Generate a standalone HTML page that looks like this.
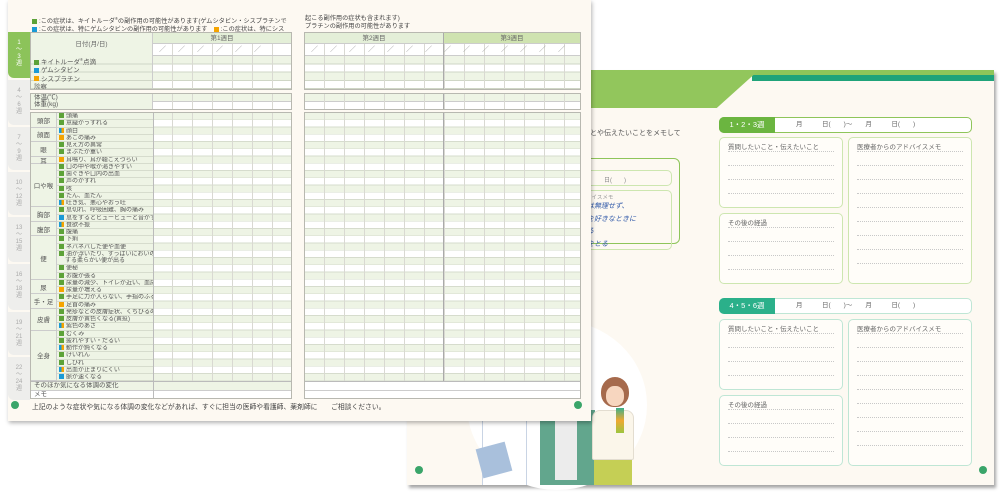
<!DOCTYPE html>
<html><head><meta charset="utf-8"><style>
*{box-sizing:border-box;margin:0;padding:0}
body{width:1000px;height:500px;background:#fff;position:relative;overflow:hidden;font-family:"Liberation Sans","Noto Sans CJK JP",sans-serif;color:#555}
.a{position:absolute}
.back{left:407px;top:70px;width:587px;height:415px;background:#fdf9f2;box-shadow:2px 3px 3px rgba(0,0,0,.35)}
.front{left:8px;top:0;width:583px;height:421px;background:#fdf9f2;box-shadow:1px 2px 4px rgba(0,0,0,.3);z-index:5}
.f{z-index:6}
.grid{background:repeating-linear-gradient(to right,transparent 0 19px,#d9d9d2 19px 20px),repeating-linear-gradient(to bottom,#eef4e5 0 6.3px,#d6dccd 6.3px 7.25px,#fff 7.25px 13.55px,#d6dccd 13.55px 14.5px);}
.box{border:1px solid #b8b8b0}
.tab{left:8px;width:22px;background:#eeeeec;border-radius:0 0 0 6px;font-size:6px;color:#aaa;text-align:center;line-height:7px;padding-top:8px;z-index:6}
.sq{display:inline-block;width:5px;height:5px;margin-right:2px;vertical-align:-0.5px}
.g{background:#5da238}.b{background:#1a9ad6}.o{background:#f5a400}.bo{background:linear-gradient(to right,#1a9ad6 50%,#f5a400 50%)}
.lab{font-size:6px;line-height:7.25px;white-space:nowrap;overflow:hidden}
.cat{font-size:6.5px;display:flex;align-items:center;justify-content:center;background:#eef4e5;border-bottom:1px solid #ccc;border-right:1px solid #ccc}
.it{background:#eef4e5;border-bottom:1px solid #d6dccd;padding-left:2px}
.num{width:8px;height:8px;border-radius:50%;background:#3aa56a}
.hd{font-size:6.5px;text-align:center;line-height:12px;color:#666}
.rbox{border:1.5px solid #cde6b0;border-radius:5px;background:#fffdf9}
.rbox2{border:1.5px solid #bfe6d5;border-radius:5px;background:#fffdf9}
.rl{font-size:6.5px;color:#666;position:absolute;left:8px;top:3px}
.dots{position:absolute;left:8px;right:8px;border-top:1px dotted #c8c8c8}
</style></head><body>

<div class="a back">
  <div class="a" style="left:0;top:0;width:587px;height:5px;background:#8ec55a"></div>
  <div class="a" style="left:345px;top:5px;width:242px;height:6px;background:#1fa37a"></div>
  <div class="a" style="left:0;top:0;width:352px;height:38px;background:#92c65c;clip-path:polygon(0 0,100% 0,88% 100%,0 100%)"></div>
  <div class="a" style="left:183px;top:58px;font-size:7px;color:#555">とや伝えたいことをメモして</div>
  <div class="a" style="left:100px;top:88px;width:173px;height:86px;border:1.5px solid #8ec55a;border-radius:6px"></div>
  <div class="a" style="left:150px;top:100px;width:115px;height:16px;border:1px solid #cde6b0;border-radius:5px;font-size:6px;color:#888;padding:4px 0 0 46px">日(　　)</div>
  <div class="a" style="left:150px;top:120px;width:115px;height:60px;border:1px solid #cde6b0;border-radius:5px;font-size:5.5px;color:#999;padding:2px 0 0 6px">らのアドバイスメモ
    <div style="color:#2f58a8;font-size:7px;line-height:12.5px;margin-left:2px;font-style:italic">いときは無理せず、<br>なものを好きなときに<br>つ食べる<br>に水分をとる</div>
  </div>
  <div class="a" style="left:60px;top:250px;width:180px;height:170px;border-radius:50%;background:#fff"></div>
  <div class="a" style="left:75px;top:335px;width:45px;height:80px;background:#fff;border:1px solid #c9d4e4;border-bottom:none"></div>
  <div class="a" style="left:72px;top:375px;width:30px;height:30px;background:#a9c0dc;transform:rotate(-15deg)"></div>
  <div class="a" style="left:133px;top:340px;width:55px;height:75px;background:#62a68d"></div>
  <div class="a" style="left:148px;top:340px;width:22px;height:70px;background:#ececec"></div>
  <div class="a" style="left:185px;top:340px;width:42px;height:50px;background:#fbf6ea;border:1px solid #e3ddd0;border-radius:8px 8px 2px 2px"></div>
  <div class="a" style="left:187px;top:390px;width:38px;height:25px;background:#c5cf55"></div>
  <div class="a" style="left:194px;top:307px;width:28px;height:30px;border-radius:50% 50% 45% 45%;background:#a66a4c"></div>
  <div class="a" style="left:199px;top:316px;width:18px;height:20px;border-radius:45%;background:#f7d6bf"></div>
  <div class="a" style="left:209px;top:338px;width:8px;height:25px;background:linear-gradient(#3bb08a,#f0a830,#9cc540)"></div>
  <div class="a num" style="left:8px;top:396px"></div>
  <div class="a num" style="left:572px;top:396px"></div>

  <div class="a" style="left:312px;top:47px;width:253px;height:16px;border:1.5px solid #8ec55a;border-radius:5px;background:#fff;font-size:6.5px;color:#666;line-height:13px;padding-left:76px">月　　　日(　　)～　　月　　　日(　　)</div>
  <div class="a" style="left:312px;top:47px;width:56px;height:16px;background:#6bb540;border-radius:5px 0 0 5px;color:#fff;font-size:7.5px;text-align:center;line-height:16px">1・2・3週</div>
  <div class="a rbox" style="left:312px;top:67px;width:124px;height:71px"><span class="rl">質問したいこと・伝えたいこと</span><div class="dots" style="top:13px"></div><div class="dots" style="top:27px"></div><div class="dots" style="top:41px"></div><div class="dots" style="top:55px"></div></div>
  <div class="a rbox" style="left:312px;top:143px;width:124px;height:71px"><span class="rl">その後の経過</span><div class="dots" style="top:13px"></div><div class="dots" style="top:27px"></div><div class="dots" style="top:41px"></div><div class="dots" style="top:55px"></div></div>
  <div class="a rbox" style="left:441px;top:67px;width:124px;height:147px"><span class="rl">医療者からのアドバイスメモ</span><div class="dots" style="top:13px"></div><div class="dots" style="top:27px"></div><div class="dots" style="top:41px"></div><div class="dots" style="top:55px"></div><div class="dots" style="top:69px"></div><div class="dots" style="top:83px"></div><div class="dots" style="top:97px"></div><div class="dots" style="top:111px"></div><div class="dots" style="top:125px"></div></div>

  <div class="a" style="left:312px;top:228px;width:253px;height:16px;border:1.5px solid #bfe6d5;border-radius:5px;background:#fff;font-size:6.5px;color:#666;line-height:13px;padding-left:76px">月　　　日(　　)～　　月　　　日(　　)</div>
  <div class="a" style="left:312px;top:228px;width:56px;height:16px;background:#2bb08a;border-radius:5px 0 0 5px;color:#fff;font-size:7.5px;text-align:center;line-height:16px">4・5・6週</div>
  <div class="a rbox2" style="left:312px;top:249px;width:124px;height:71px"><span class="rl">質問したいこと・伝えたいこと</span><div class="dots" style="top:13px"></div><div class="dots" style="top:27px"></div><div class="dots" style="top:41px"></div><div class="dots" style="top:55px"></div></div>
  <div class="a rbox2" style="left:312px;top:325px;width:124px;height:71px"><span class="rl">その後の経過</span><div class="dots" style="top:13px"></div><div class="dots" style="top:27px"></div><div class="dots" style="top:41px"></div><div class="dots" style="top:55px"></div></div>
  <div class="a rbox2" style="left:441px;top:249px;width:124px;height:147px"><span class="rl">医療者からのアドバイスメモ</span><div class="dots" style="top:13px"></div><div class="dots" style="top:27px"></div><div class="dots" style="top:41px"></div><div class="dots" style="top:55px"></div><div class="dots" style="top:69px"></div><div class="dots" style="top:83px"></div><div class="dots" style="top:97px"></div><div class="dots" style="top:111px"></div><div class="dots" style="top:125px"></div></div>
</div>

<div class="a front"></div>
<div class="a f" style="left:32px;top:15px;font-size:6.2px;line-height:8px;color:#444;white-space:nowrap"><span class="sq g"></span>:この症状は、キイトルーダ<sup style="font-size:4px">®</sup>の副作用の可能性があります(ゲムシタビン・シスプラチンで<br><span class="sq b"></span>:この症状は、特にゲムシタビンの副作用の可能性があります　<span class="sq o"></span>:この症状は、特にシス</div>
<div class="a f" style="left:305px;top:15px;font-size:6.2px;line-height:8px;color:#444;white-space:nowrap">起こる副作用の症状も含まれます)<br>プラチンの副作用の可能性があります</div>

<div class="a tab" style="top:32px;height:46px;background:#8cc35a;color:#fff">1<br>〜<br>3<br>週</div>
<div class="a tab" style="top:80px;height:45px">4<br>〜<br>6<br>週</div>
<div class="a tab" style="top:127px;height:43px">7<br>〜<br>9<br>週</div>
<div class="a tab" style="top:172px;height:43px">10<br>〜<br>12<br>週</div>
<div class="a tab" style="top:217px;height:45px">13<br>〜<br>15<br>週</div>
<div class="a tab" style="top:264px;height:46px">16<br>〜<br>18<br>週</div>
<div class="a tab" style="top:312px;height:43px">19<br>〜<br>21<br>週</div>
<div class="a tab" style="top:357px;height:43px">22<br>〜<br>24<br>週</div>

<div class="a f box" style="left:30px;top:32px;width:262px;height:58px;background:#fff"></div>
<div class="a f hd" style="left:31px;top:33px;width:122px;height:23px;line-height:23px;background:#eef4e5;border-right:1px solid #ccc">日付(月/日)</div>
<div class="a f hd" style="left:153px;top:33px;width:138px;height:11px;line-height:11px;background:#e4efd8;border-bottom:1px solid #ccc">第1週目</div>
<div class="a f" style="left:153px;top:44px;width:138px;height:12px;background:repeating-linear-gradient(to right,transparent 0 19px,#d9d9d2 19px 20px);font-size:7px;color:#999;letter-spacing:12px;padding-left:6px;line-height:12px;border-bottom:1px solid #ccc">／／／／／／／</div>
<div class="a f lab" style="left:31px;top:56px;width:122px;height:33px;font-size:6.5px;line-height:8.3px;padding-left:3px;border-right:1px solid #ccc;background:repeating-linear-gradient(to bottom,#eef4e5 0 7.3px,#cfd6c6 7.3px 8.3px)"><span class="sq g"></span>キイトルーダ<sup style="font-size:4px">®</sup>点滴<br><span class="sq b"></span>ゲムシタビン<br><span class="sq o"></span>シスプラチン<br>診察</div>
<div class="a f" style="left:153px;top:56px;width:138px;height:33px;background:repeating-linear-gradient(to right,transparent 0 19px,#d9d9d2 19px 20px),repeating-linear-gradient(to bottom,#eef4e5 0 7.3px,#cfd6c6 7.3px 8.3px,#fff 8.3px 15.6px,#cfd6c6 15.6px 16.6px)"></div>

<div class="a f box" style="left:30px;top:93px;width:262px;height:17px;background:#fff"></div>
<div class="a f lab" style="left:31px;top:94px;width:122px;height:15px;font-size:6.5px;padding-left:3px;border-right:1px solid #ccc;background:#eef4e5">体温(℃)<br>体重(kg)</div>
<div class="a f" style="left:153px;top:94px;width:138px;height:15px;background:repeating-linear-gradient(to right,transparent 0 19px,#d9d9d2 19px 20px),linear-gradient(#eef4e5 0 7px,#ccc 7px 8px,#fff 8px)"></div>

<div class="a f box" style="left:30px;top:112px;width:262px;height:287px;background:#fff"></div>
<div class="a f" style="left:31px;top:113px;width:122px;display:grid;grid-template-columns:26px 96px;grid-template-rows:repeat(37,7.25px)">
<div class="cat" style="grid-row:span 2">頭部</div><div class="lab it"><span class="sq g"></span>頭痛</div><div class="lab it"><span class="sq g"></span>意識がうすれる</div>
<div class="cat" style="grid-row:span 2">顔面</div><div class="lab it"><span class="sq bo"></span>顔白</div><div class="lab it"><span class="sq o"></span>あごの痛み</div>
<div class="cat" style="grid-row:span 2">眼</div><div class="lab it"><span class="sq g"></span>見え方の異常</div><div class="lab it"><span class="sq g"></span>まぶたが重い</div>
<div class="cat">耳</div><div class="lab it"><span class="sq o"></span>耳鳴り、耳が聴こえづらい</div>
<div class="cat" style="grid-row:span 6">口や喉</div><div class="lab it"><span class="sq g"></span>口の中や喉が渇きやすい</div><div class="lab it"><span class="sq g"></span>歯ぐきや口内の出血</div><div class="lab it"><span class="sq g"></span>声のかすれ</div><div class="lab it"><span class="sq g"></span>咳</div><div class="lab it"><span class="sq g"></span>たん、血たん</div><div class="lab it"><span class="sq bo"></span>吐き気、悪心やおう吐</div>
<div class="cat" style="grid-row:span 2">胸部</div><div class="lab it"><span class="sq g"></span>息切れ、呼吸困難、胸の痛み</div><div class="lab it"><span class="sq b"></span>息をするとヒューヒューと音がする</div>
<div class="cat" style="grid-row:span 2">腹部</div><div class="lab it"><span class="sq bo"></span>食欲不振</div><div class="lab it"><span class="sq g"></span>腹痛</div>
<div class="cat" style="grid-row:span 6">便</div><div class="lab it"><span class="sq g"></span>下痢</div><div class="lab it"><span class="sq g"></span>ネバネバした便や血便</div><div class="lab it" style="grid-row:span 2;line-height:7px"><span class="sq g"></span>油が浮いたり、すっぱいにおいの<br>　する柔らかい便が出る</div><div class="lab it"><span class="sq g"></span>便秘</div><div class="lab it"><span class="sq g"></span>お腹が張る</div>
<div class="cat" style="grid-row:span 2">尿</div><div class="lab it"><span class="sq g"></span>尿量の減少、トイレが近い、血尿</div><div class="lab it"><span class="sq o"></span>尿量が増える</div>
<div class="cat" style="grid-row:span 2">手・足</div><div class="lab it"><span class="sq g"></span>手足に力が入らない、手指のふるえ</div><div class="lab it"><span class="sq o"></span>足首の痛み</div>
<div class="cat" style="grid-row:span 3">皮膚</div><div class="lab it"><span class="sq g"></span>発疹などの皮膚症状、くちびるのただれ</div><div class="lab it"><span class="sq g"></span>皮膚が黄色くなる(黄疸)</div><div class="lab it"><span class="sq bo"></span>紫色のあざ</div>
<div class="cat" style="grid-row:span 7">全身</div><div class="lab it"><span class="sq g"></span>むくみ</div><div class="lab it"><span class="sq g"></span>疲れやすい・だるい</div><div class="lab it"><span class="sq bo"></span>動作が鈍くなる</div><div class="lab it"><span class="sq g"></span>けいれん</div><div class="lab it"><span class="sq g"></span>しびれ</div><div class="lab it"><span class="sq bo"></span>出血が止まりにくい</div><div class="lab it"><span class="sq b"></span>脈が速くなる</div>
</div>
<div class="a f grid" style="left:153px;top:113px;width:138px;height:268px"></div>
<div class="a f" style="left:153px;top:113px;width:1px;height:285px;background:#bbb"></div>
<div class="a f lab" style="left:31px;top:381px;width:260px;height:17px;font-size:6.5px;line-height:8.5px;padding-left:3px;border-top:1px solid #bbb;background:linear-gradient(#eef4e5 0 8px,#ccc 8px 9px,#fff 9px)">そのほか気になる体調の変化<br>メモ</div>
<div class="a f" style="left:153px;top:381px;width:1px;height:17px;background:#bbb"></div>

<div class="a f box" style="left:304px;top:32px;width:277px;height:58px;background:#fff"></div>
<div class="a f hd" style="left:305px;top:33px;width:138px;height:11px;line-height:11px;background:#e4efd8;border-bottom:1px solid #ccc">第2週目</div>
<div class="a f hd" style="left:443px;top:33px;width:137px;height:11px;line-height:11px;background:#cfe3b0;border-bottom:1px solid #ccc;border-left:1px solid #aaa">第3週目</div>
<div class="a f" style="left:305px;top:44px;width:275px;height:12px;background:repeating-linear-gradient(to right,transparent 0 19px,#d9d9d2 19px 20px);font-size:7px;color:#999;letter-spacing:12px;padding-left:6px;line-height:12px;border-bottom:1px solid #ccc;white-space:nowrap">／／／／／／／／／／／／／／</div>
<div class="a f" style="left:305px;top:56px;width:275px;height:33px;background:repeating-linear-gradient(to right,transparent 0 19px,#d9d9d2 19px 20px),repeating-linear-gradient(to bottom,#eef4e5 0 7.3px,#cfd6c6 7.3px 8.3px,#fff 8.3px 15.6px,#cfd6c6 15.6px 16.6px)"></div>
<div class="a f box" style="left:304px;top:93px;width:277px;height:17px;background:#fff"></div>
<div class="a f" style="left:305px;top:94px;width:275px;height:15px;background:repeating-linear-gradient(to right,transparent 0 19px,#d9d9d2 19px 20px),linear-gradient(#eef4e5 0 7px,#ccc 7px 8px,#fff 8px)"></div>
<div class="a f box" style="left:304px;top:112px;width:277px;height:287px;background:#fff"></div>
<div class="a f grid" style="left:305px;top:113px;width:275px;height:268px"></div>
<div class="a f" style="left:305px;top:381px;width:275px;height:17px;border-top:1px solid #bbb;background:linear-gradient(#fff 0 8px,#ccc 8px 9px,#fff 9px)"></div>
<div class="a f" style="left:443px;top:33px;width:1px;height:56px;background:#aaa"></div>
<div class="a f" style="left:443px;top:94px;width:1px;height:15px;background:#aaa"></div>
<div class="a f" style="left:443px;top:113px;width:1px;height:268px;background:#aaa"></div>

<div class="a f num" style="left:11px;top:401px"></div>
<div class="a f num" style="left:574px;top:401px"></div>
<div class="a f" style="left:32px;top:401px;font-size:6.8px;color:#444;white-space:nowrap">上記のような症状や気になる体調の変化などがあれば、すぐに担当の医師や看護師、薬剤師に　　ご相談ください。</div>
</body></html>
